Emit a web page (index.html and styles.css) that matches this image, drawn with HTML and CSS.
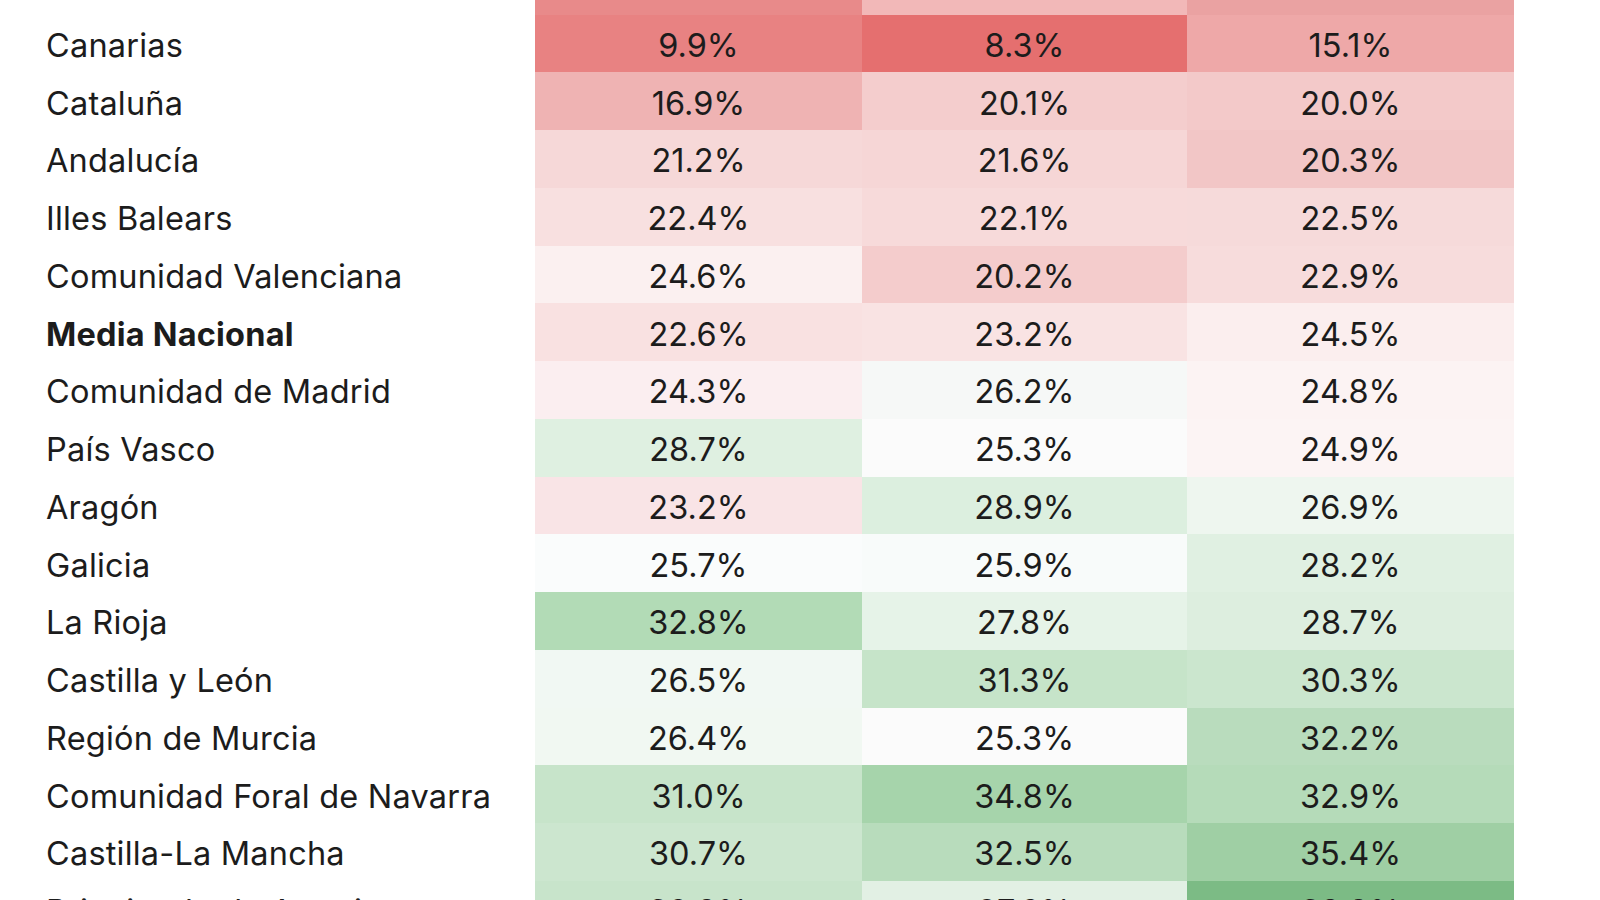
FILE: index.html
```html
<!DOCTYPE html>
<html lang="es">
<head>
<meta charset="utf-8">
<title>Tabla por comunidades</title>
<link rel="stylesheet" href="styles.css">
</head>
<body>
<div class="table">
  <div class="row"><div class="label">Cantabria</div><div class="cell" style="background:#e88a8a">10.7%</div><div class="cell" style="background:#f2b8b8">13.7%</div><div class="cell" style="background:#eaa2a2">14.1%</div></div>
  <div class="row"><div class="label">Canarias</div><div class="cell" style="background:#e88282">9.9%</div><div class="cell" style="background:#e56f6f">8.3%</div><div class="cell" style="background:#eea8a8">15.1%</div></div>
  <div class="row"><div class="label">Cataluña</div><div class="cell" style="background:#efb3b3">16.9%</div><div class="cell" style="background:#f4cdcd">20.1%</div><div class="cell" style="background:#f3c9c9">20.0%</div></div>
  <div class="row"><div class="label">Andalucía</div><div class="cell" style="background:#f6d8d8">21.2%</div><div class="cell" style="background:#f6d6d6">21.6%</div><div class="cell" style="background:#f2c6c6">20.3%</div></div>
  <div class="row"><div class="label">Illes Balears</div><div class="cell" style="background:#f8e0e0">22.4%</div><div class="cell" style="background:#f7dada">22.1%</div><div class="cell" style="background:#f6dada">22.5%</div></div>
  <div class="row"><div class="label">Comunidad Valenciana</div><div class="cell" style="background:#fbf0f0">24.6%</div><div class="cell" style="background:#f4cccc">20.2%</div><div class="cell" style="background:#f7dcdc">22.9%</div></div>
  <div class="row"><div class="label bold">Media Nacional</div><div class="cell" style="background:#f9e1e1">22.6%</div><div class="cell" style="background:#f9e3e3">23.2%</div><div class="cell" style="background:#fbeeee">24.5%</div></div>
  <div class="row"><div class="label">Comunidad de Madrid</div><div class="cell" style="background:#fbeef0">24.3%</div><div class="cell" style="background:#f6f8f7">26.2%</div><div class="cell" style="background:#fcf3f3">24.8%</div></div>
  <div class="row"><div class="label">País Vasco</div><div class="cell" style="background:#dff0e1">28.7%</div><div class="cell" style="background:#fbfbfb">25.3%</div><div class="cell" style="background:#fcf4f4">24.9%</div></div>
  <div class="row"><div class="label">Aragón</div><div class="cell" style="background:#f9e4e6">23.2%</div><div class="cell" style="background:#dcefdf">28.9%</div><div class="cell" style="background:#eef6ef">26.9%</div></div>
  <div class="row"><div class="label">Galicia</div><div class="cell" style="background:#fafcfc">25.7%</div><div class="cell" style="background:#f8fbfa">25.9%</div><div class="cell" style="background:#e0f0e2">28.2%</div></div>
  <div class="row"><div class="label">La Rioja</div><div class="cell" style="background:#b2dbb6">32.8%</div><div class="cell" style="background:#e6f3e8">27.8%</div><div class="cell" style="background:#ddeedf">28.7%</div></div>
  <div class="row"><div class="label">Castilla y León</div><div class="cell" style="background:#f1f8f3">26.5%</div><div class="cell" style="background:#c6e4c9">31.3%</div><div class="cell" style="background:#cbe6ce">30.3%</div></div>
  <div class="row"><div class="label">Región de Murcia</div><div class="cell" style="background:#f1f8f2">26.4%</div><div class="cell" style="background:#fbfbfb">25.3%</div><div class="cell" style="background:#b9dcbd">32.2%</div></div>
  <div class="row"><div class="label">Comunidad Foral de Navarra</div><div class="cell" style="background:#c7e4ca">31.0%</div><div class="cell" style="background:#a6d4ab">34.8%</div><div class="cell" style="background:#b5dbb9">32.9%</div></div>
  <div class="row"><div class="label">Castilla-La Mancha</div><div class="cell" style="background:#cce6cf">30.7%</div><div class="cell" style="background:#b8dcbc">32.5%</div><div class="cell" style="background:#9fcfa4">35.4%</div></div>
  <div class="row"><div class="label">Principado de Asturias</div><div class="cell" style="background:#c8e4cb">30.9%</div><div class="cell" style="background:#e2f0e4">27.6%</div><div class="cell" style="background:#7cbb85">38.9%</div></div>
</div>
</body>
</html>
```

FILE: styles.css
```css
html, body {
  margin: 0;
  padding: 0;
  background: #ffffff;
  overflow: hidden;
  height: 900px;
}
body {
  font-family: Inter, "Liberation Sans", sans-serif;
  color: #1c1c1c;
}
.table {
  margin-top: -43.25px;
  display: flex;
  flex-direction: column;
}
.row {
  display: grid;
  grid-template-columns: 535px 327px 325px 327px;
  height: 57.75px;
}
.label {
  display: flex;
  align-items: center;
  padding-left: 46px;
  padding-top: 4px;
  font-size: 32.5px;
  font-weight: 400;
  letter-spacing: 0.2px;
  white-space: nowrap;
}
.label.bold {
  font-weight: 700;
}
.cell {
  display: flex;
  align-items: center;
  justify-content: center;
  padding-top: 4px;
  font-size: 32.5px;
}
```
